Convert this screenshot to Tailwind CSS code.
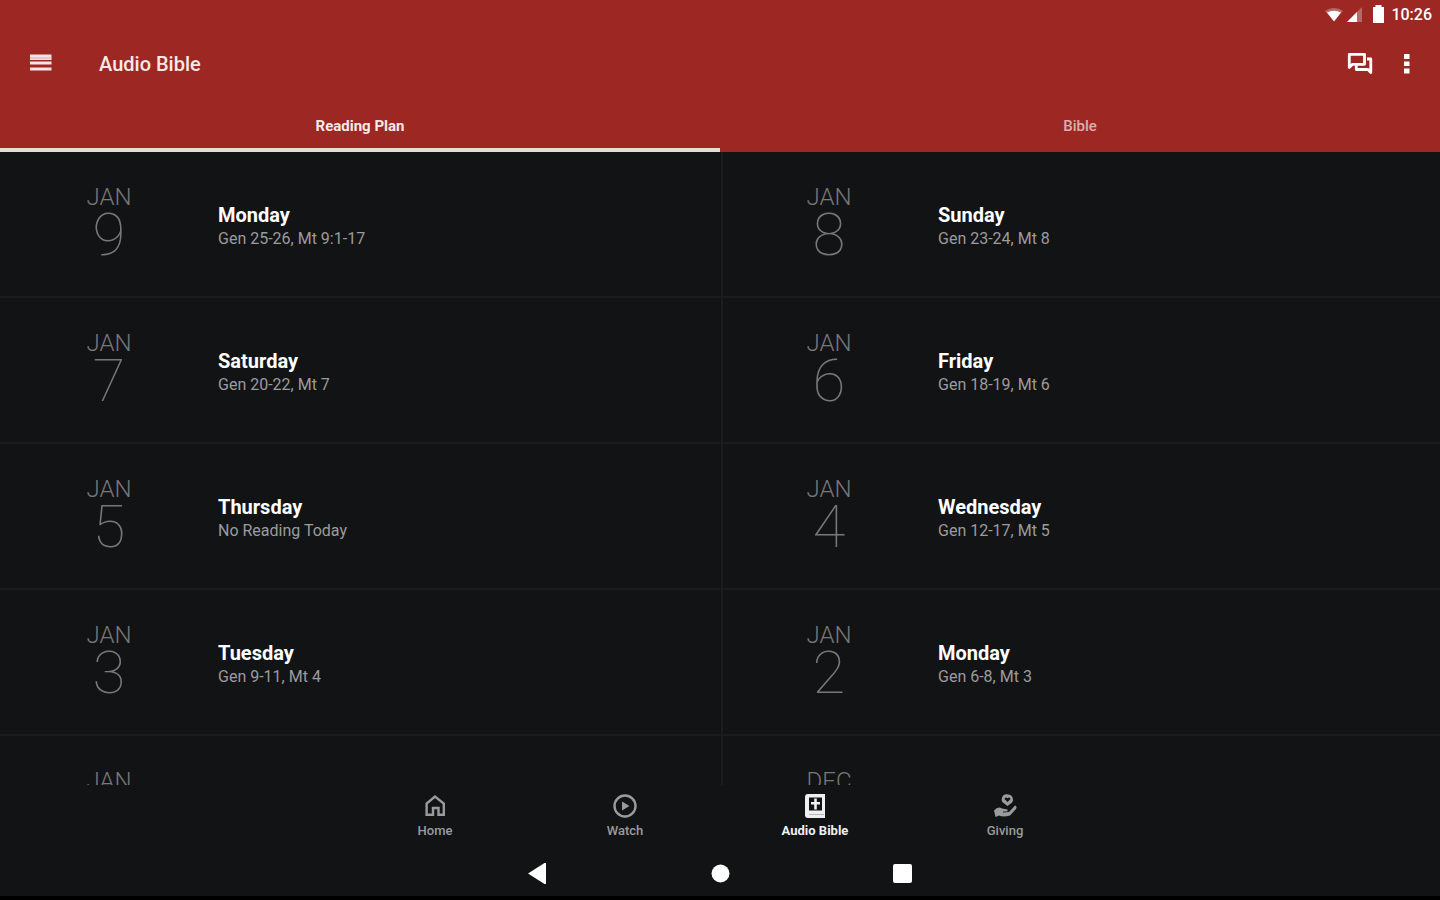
<!DOCTYPE html>
<html lang="en">
<head>
<meta charset="utf-8">
<meta name="viewport" content="width=device-width, initial-scale=1">
<title>Audio Bible</title>
<script src="https://cdn.jsdelivr.net/npm/@tailwindcss/browser@4"></script>
</head>
<body class="flex h-screen flex-col overflow-hidden bg-[#121315] font-[Roboto,sans-serif] text-white">
<header class="shrink-0 bg-[#9c2723]">
  <div class="flex h-7 items-center justify-end gap-1 pr-2">
    <svg class="h-4 w-5" viewBox="0 0 20 16" aria-hidden="true"><path d="M2 5Q11-1 20 5L11 15Z" fill="#fff" fill-opacity=".3"/><path d="M4 6.500Q11 3 18 6.500L11 15.500Z" fill="#fff"/></svg>
    <svg class="h-4 w-4" viewBox="0 0 16 16" aria-hidden="true"><path d="M0 16L15 1V16Z" fill="#fff" fill-opacity=".3"/><path d="M0 16L10 6V16Z" fill="#fff"/></svg>
    <svg class="ml-1 h-[18px] w-4" viewBox="0 0 16 18" aria-hidden="true"><path d="M4.500 0H10.500V2H13V18H2V2H4.500Z" fill="#fff"/></svg>
    <span class="pt-0.5 text-base leading-6 font-medium">10:26</span>
  </div>
  <div class="flex h-[72px] items-center pr-[21px] pl-7">
    <button type="button" aria-label="Menu" class="text-[#f6e4e3]"><svg class="h-6 w-6" viewBox="0 0 24 24" fill="currentColor"><path d="M2 2.500H23.500V8H2ZM2 9.500H23.500V12.500H2ZM2 15.500H23.500V18.500H2Z"/><path d="M2 5.500H23.500V6.500H2Z" fill="#d9a9a7"/></svg></button>
    <h1 class="ml-[47px] flex-1 text-xl font-medium text-[#f8e9e8]">Audio Bible</h1>
    <button type="button" aria-label="Messages" class="mr-[21px]"><svg class="h-7 w-7" viewBox="0 0 28 28" fill="none" stroke="#fff" stroke-width="2.800" stroke-linejoin="round"><path d="M3.300 17.500V4.300H18.500V14.300H6.500Z"/><path d="M21 9H24.800V22.500L22 19.500H10.300V15.500"/></svg></button>
    <button type="button" aria-label="More options"><svg class="h-6 w-6" viewBox="0 0 24 24" fill="#fff"><path d="M9 2H14.500V7H9ZM9 9.500H14.500V14H9ZM9 16.500H14.500V21.500H9Z"/></svg></button>
  </div>
  <div role="tablist" class="grid h-[52px] grid-cols-2 text-[15px]">
    <button type="button" role="tab" aria-selected="true" class="border-b-4 border-[#e8dcda] pt-1 font-bold text-[#f8e9e8]">Reading Plan</button>
    <button type="button" role="tab" aria-selected="false" class="border-b-4 border-transparent pt-1 font-medium text-[#dbb0ae]">Bible</button>
  </div>
</header>
<main class="min-h-0 flex-1 overflow-hidden">
  <ul id="plan" class="grid grid-cols-2"></ul>
</main>
<template id="day">
  <li class="relative flex h-[146px] border-b-2 border-[#1b1c1e]">
    <a href="#" class="flex flex-1">
      <time class="flex w-[218px] flex-col items-center pt-[33px] text-[#77787a]">
        <span data-month class="text-2xl leading-6 font-light"></span>
        <span data-date class="text-[60px] leading-[52px] font-thin"></span>
      </time>
      <span class="flex flex-col pt-[51px]">
        <strong data-name class="text-xl leading-6 font-bold"></strong>
        <span data-text class="text-base leading-6 text-[#9b9c9e]"></span>
      </span>
    </a>
    <span data-divider class="absolute top-0 -bottom-0.5 left-px w-0.5 bg-[#1b1c1e]"></span>
  </li>
</template>
<nav aria-label="Main" class="flex h-[63px] shrink-0 justify-center text-[13px] leading-4 font-medium text-[#9a9b9d]">
  <a href="#" class="flex w-[190px] flex-col items-center gap-1 pt-2">
    <svg class="h-[26px] w-[26px]" viewBox="0 0 26 26" fill="none" stroke="currentColor" stroke-width="2.400"><path d="M4.600 21.800V10.500L13 3.500L21.800 10.500V21.800H16.500V15H11V21.800Z"/></svg>Home</a>
  <a href="#" class="flex w-[190px] flex-col items-center gap-1 pt-2">
    <svg class="h-[26px] w-[26px]" viewBox="0 0 26 26" fill="none" stroke="currentColor" stroke-width="2.400"><circle cx="13" cy="13" r="10.500"/><path d="M10 8.500L17.500 13L10 17.500Z" fill="currentColor" stroke="none"/></svg>Watch</a>
  <a href="#" aria-current="page" class="flex w-[190px] flex-col items-center gap-1 pt-2 font-bold text-[#f0f0f0]">
    <svg class="h-[26px] w-[26px]" viewBox="0 0 26 26"><path d="M6 1H23V25H6Q3 25 3 22V4Q3 1 6 1Z" fill="currentColor"/><path d="M7 4.500H20V17.500H7Z" fill="#121315"/><path d="M12.200 5.500H14.800V9H18V11.500H14.800V16.500H12.200V11.500H9V9H12.200Z" fill="currentColor"/><path d="M7 21.500H22" stroke="#b5b5b5" stroke-width="1"/></svg>Audio Bible</a>
  <a href="#" class="flex w-[190px] flex-col items-center gap-1 pt-2">
    <svg class="h-[26px] w-[26px]" viewBox="0 0 26 26" fill="currentColor"><path d="M16 1.500A5 5 0 0 1 18.500 10.800L15.500 13L12.500 10.800A5 5 0 0 1 16 1.500ZM15.500 9L18.500 6Q17.500 3.500 15.500 5.200Q13.500 3.500 12.500 6Z" fill-rule="evenodd"/><path d="M2 17.500Q6 13 10 15.500L15.500 16.500V18.500H11V19.500L17 19L23 12.500Q25.500 13.500 24 16L18 22.500Q11 24.500 7 22.500L3.500 24Z"/></svg>Giving</a>
</nav>
<footer class="flex h-[52px] shrink-0 justify-center gap-[155px] border-b-4 border-black">
  <button type="button" aria-label="Back"><svg class="h-7 w-7" viewBox="0 0 28 28" fill="#fff"><path d="M5 15.500L21.500 5H23V26H21.500Z"/></svg></button>
  <button type="button" aria-label="Home screen"><svg class="h-7 w-7" viewBox="0 0 28 28" fill="#fff"><circle cx="14.500" cy="15.500" r="9"/></svg></button>
  <button type="button" aria-label="Recent apps"><svg class="h-7 w-7" viewBox="0 0 28 28" fill="#fff"><rect x="4" y="6" width="19" height="19" rx="2"/></svg></button>
</footer>
<script>
const days = [
  ["JAN", "9", "Monday", "Gen 25-26, Mt 9:1-17"],
  ["JAN", "8", "Sunday", "Gen 23-24, Mt 8"],
  ["JAN", "7", "Saturday", "Gen 20-22, Mt 7"],
  ["JAN", "6", "Friday", "Gen 18-19, Mt 6"],
  ["JAN", "5", "Thursday", "No Reading Today"],
  ["JAN", "4", "Wednesday", "Gen 12-17, Mt 5"],
  ["JAN", "3", "Tuesday", "Gen 9-11, Mt 4"],
  ["JAN", "2", "Monday", "Gen 6-8, Mt 3"],
  ["JAN", "", "", ""],
  ["DEC", "", "", ""]
];
const plan = document.getElementById("plan");
const template = document.getElementById("day");
days.forEach(([month, date, name, text], index) => {
  const item = template.content.cloneNode(true);
  item.querySelector("[data-month]").textContent = month;
  item.querySelector("[data-date]").textContent = date;
  item.querySelector("[data-name]").textContent = name;
  item.querySelector("[data-text]").textContent = text;
  if (index % 2 === 0) item.querySelector("[data-divider]").remove();
  plan.append(item);
});
</script>
</body>
</html>
